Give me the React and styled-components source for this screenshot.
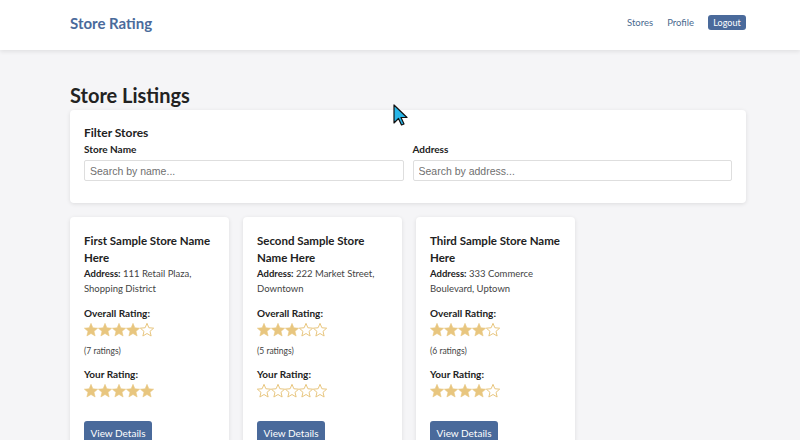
import React from 'react';
import styled, { createGlobalStyle } from 'styled-components';

const GlobalStyle = createGlobalStyle`
  body {
    margin: 0;
    background: #f5f5f7;
    font-family: Lato, "Open Sans", sans-serif;
    color: #222222;
  }
`;

const Header = styled.header`
  height: 50px;
  background: #ffffff;
  box-shadow: 0 2px 4px rgba(0, 0, 0, 0.08);
`;

const HeaderInner = styled.div`
  width: 676px;
  margin-left: 70px;
  height: 45px;
  display: flex;
  align-items: center;
  justify-content: space-between;
`;

const Brand = styled.div`
  font-size: 15px;
  font-weight: bold;
  color: #4a6a9b;
`;

const Nav = styled.nav`
  display: flex;
  align-items: center;
  gap: 14px;
`;

const NavLink = styled.a`
  font-size: 9.5px;
  color: #4a6a8f;
  text-decoration: none;
`;

const LogoutButton = styled.button`
  font-family: inherit;
  font-size: 9px;
  color: #ffffff;
  background: #4a6a9b;
  border: none;
  border-radius: 3px;
  width: 38px;
  padding: 0;
  height: 15px;
  line-height: 15px;
`;

const Main = styled.main`
  width: 676px;
  margin-left: 70px;
  padding-top: 32px;
`;

const PageTitle = styled.h1`
  margin: 0 0 2px;
  font-size: 20px;
  font-weight: bold;
  line-height: 26px;
`;

const FilterCard = styled.section`
  background: #ffffff;
  border-radius: 4px;
  box-shadow: 0 1px 4px rgba(0, 0, 0, 0.1);
  padding: 15px 14px 22px;
`;

const FilterTitle = styled.h2`
  margin: 0 0 2px;
  font-size: 12px;
  font-weight: bold;
  line-height: 15px;
`;

const FilterGrid = styled.div`
  display: grid;
  grid-template-columns: 1fr 1fr;
  gap: 9px;
`;

const Field = styled.label`
  display: flex;
  flex-direction: column;
  gap: 4px;
`;

const FieldLabel = styled.span`
  font-size: 10px;
  font-weight: bold;
  line-height: 14px;
`;

const Input = styled.input`
  box-sizing: border-box;
  height: 21px;
  padding: 0 5px;
  border: 1px solid #dedede;
  border-radius: 2px;
  font-family: "Liberation Sans", Arial, sans-serif;
  font-size: 10.5px;
  &::placeholder {
    color: #6f6f6f;
  }
`;

const CardGrid = styled.div`
  display: flex;
  gap: 14px;
  margin-top: 14px;
`;

const Card = styled.article`
  width: 159px;
  box-sizing: border-box;
  background: #ffffff;
  border-radius: 4px;
  box-shadow: 0 1px 4px rgba(0, 0, 0, 0.1);
  padding: 15px 14px 0;
  height: 240px;
`;

const StoreName = styled.h3`
  margin: 0;
  font-size: 11.5px;
  font-weight: bold;
  line-height: 17px;
`;

const Address = styled.p`
  margin: 0;
  font-size: 9.5px;
  line-height: 15px;
  color: #444444;
  b {
    color: #222222;
  }
`;

const RatingLabel = styled.div`
  margin-top: 10px;
  font-size: 10px;
  font-weight: bold;
  line-height: 14px;
`;

const Stars = styled.div`
  display: flex;
  height: 18px;
  margin-top: 1px;
  align-items: center;
`;

const Count = styled.div`
  margin-top: 6px;
  font-size: 8.5px;
  color: #444444;
  line-height: 12px;
`;

const DetailsButton = styled.button`
  margin-top: 21px;
  font-family: inherit;
  font-size: 10px;
  color: #ffffff;
  background: #4a6a9b;
  border: none;
  border-radius: 3px;
  width: 68px;
  height: 22px;
  padding: 2px 0 0;
`;

const Cursor = styled.svg`
  position: absolute;
  left: 393px;
  top: 104px;
`;

const StarIcon = ({ filled }) => (
  <svg width="14" height="14" viewBox="1.5 1.5 21 21">
    <path
      d="M12 17.27L18.18 21l-1.64-7.03L22 9.24l-7.19-.61L12 2 9.19 8.63 2 9.24l5.46 4.73L5.82 21z"
      fill={filled ? '#e8c67f' : 'none'}
      stroke="#e8c67f"
      strokeWidth={filled ? 0.8 : 1.5}
      strokeLinejoin="round"
    />
  </svg>
);

const StarRow = ({ value }) => (
  <Stars>
    {[1, 2, 3, 4, 5].map((n) => (
      <StarIcon key={n} filled={n <= value} />
    ))}
  </Stars>
);

const stores = [
  {
    name: 'First Sample Store Name Here',
    address: '111 Retail Plaza, Shopping District',
    overall: 4,
    count: 7,
    mine: 5,
  },
  {
    name: 'Second Sample Store Name Here',
    address: '222 Market Street, Downtown',
    overall: 3,
    count: 5,
    mine: 0,
  },
  {
    name: 'Third Sample Store Name Here',
    address: '333 Commerce Boulevard, Uptown',
    overall: 4,
    count: 6,
    mine: 4,
  },
];

const App = () => (
  <>
    <GlobalStyle />
    <Header>
      <HeaderInner>
        <Brand>Store Rating</Brand>
        <Nav>
          <NavLink>Stores</NavLink>
          <NavLink>Profile</NavLink>
          <LogoutButton>Logout</LogoutButton>
        </Nav>
      </HeaderInner>
    </Header>
    <Main>
      <PageTitle>Store Listings</PageTitle>
      <FilterCard>
        <FilterTitle>Filter Stores</FilterTitle>
        <FilterGrid>
          <Field>
            <FieldLabel>Store Name</FieldLabel>
            <Input placeholder="Search by name..." />
          </Field>
          <Field>
            <FieldLabel>Address</FieldLabel>
            <Input placeholder="Search by address..." />
          </Field>
        </FilterGrid>
      </FilterCard>
      <CardGrid>
        {stores.map((s) => (
          <Card key={s.name}>
            <StoreName>{s.name}</StoreName>
            <Address>
              <b>Address:</b> {s.address}
            </Address>
            <RatingLabel>Overall Rating:</RatingLabel>
            <StarRow value={s.overall} />
            <Count>({s.count} ratings)</Count>
            <RatingLabel>Your Rating:</RatingLabel>
            <StarRow value={s.mine} />
            <DetailsButton>View Details</DetailsButton>
          </Card>
        ))}
      </CardGrid>
    </Main>
    <Cursor width="16" height="24" viewBox="0 0 16 24">
      <path d="M1 1 L1 19 L5.5 14.5 L8.5 21 L11 20 L8 13.5 L14 13.5 Z" fill="#29b6e8" stroke="#111" strokeWidth="1.2" strokeLinejoin="round" />
    </Cursor>
  </>
);

export default App;
